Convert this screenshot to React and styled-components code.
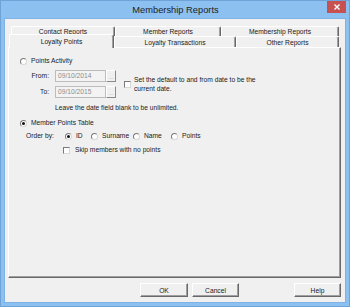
import React from 'react';
import styled, { createGlobalStyle } from 'styled-components';

const Global = createGlobalStyle`
  html, body { margin: 0; padding: 0; background: #8cc0f0; }
  body { font-family: "Liberation Sans", Arial, sans-serif; }
  * { box-sizing: border-box; }
`;

const Window = styled.div`
  width: 350px;
  height: 307px;
  border: 1px solid #6fa3d8;
  background: #8cc0f0;
  display: flex;
  flex-direction: column;
`;

const TitleBar = styled.div`
  height: 18px;
  flex: none;
  display: grid;
  grid-template-columns: 1fr auto 1fr;
  align-items: start;
  padding: 0 3px 0 4px;
`;

const Title = styled.div`
  grid-column: 2;
  font-size: 9.3px;
  line-height: 18px;
  color: #1e1e1e;
  white-space: nowrap;
`;

const Close = styled.div`
  grid-column: 3;
  justify-self: end;
  width: 19px;
  height: 12px;
  background: #c75050;
  display: flex;
  align-items: center;
  justify-content: center;
`;

const Client = styled.div`
  flex: 1;
  margin: 0 4px 4px;
  background: #f0f0f0;
  outline: 1px solid #7fb3e6;
  display: flex;
  flex-direction: column;
  padding: 7px 4px 5px 3px;
  font-size: 6.7px;
  color: #1a1a1a;
`;

const TabArea = styled.div`
  display: flex;
  flex-direction: column;
  padding-left: 3px;
  flex: none;
`;

const TabRow = styled.div`
  display: flex;
  height: ${p => p.$h}px;
`;

const Tab = styled.div`
  width: ${p => p.$w}px;
  height: 100%;
  display: flex;
  align-items: center;
  justify-content: center;
  white-space: nowrap;
  background: #f0f0f0;
  border-top: 1px solid #ffffff;
  border-left: 1px solid #ffffff;
  border-right: 1px solid #696969;
  box-shadow: inset -1px 0 0 #a0a0a0;
  border-radius: 2px 2px 0 0;
`;

const ActiveTab = styled(Tab)`
  width: ${p => p.$w + 2}px;
  height: calc(100% + 3px);
  margin: -2px 0 -1px -2px;
  position: relative;
  z-index: 1;
  padding-bottom: 1px;
`;

const Panel = styled.div`
  flex: 1;
  border-style: solid;
  border-width: 1px;
  border-color: #ffffff #696969 #696969 #ffffff;
  box-shadow: inset -1px -1px 0 #a0a0a0;
  padding: 9px 0 0 11px;
  display: flex;
  flex-direction: column;
  align-items: flex-start;
`;

const OptionRow = styled.div`
  display: flex;
  align-items: center;
  gap: ${p => p.$gap || 4}px;
  height: 8px;
  line-height: 8px;
  margin-top: ${p => p.$mt || 0}px;
  margin-left: ${p => p.$ml || 0}px;
`;

const Radio = styled.span`
  width: 7px;
  height: 7px;
  flex: none;
  border-radius: 50%;
  border: 1px solid;
  border-color: #7a7a7a #d8d8d8 #d8d8d8 #7a7a7a;
  background: #ffffff;
  display: flex;
  align-items: center;
  justify-content: center;
  &::after {
    content: '';
    width: 3px;
    height: 3px;
    border-radius: 50%;
    background: ${p => (p.$checked ? '#111' : 'transparent')};
  }
`;

const Check = styled.span`
  width: 7px;
  height: 7px;
  flex: none;
  border: 1px solid;
  border-color: #7a7a7a #d8d8d8 #d8d8d8 #7a7a7a;
  background: #ffffff;
`;

const DateBlock = styled.div`
  display: flex;
  align-items: center;
  margin-top: 5px;
`;

const DateGrid = styled.div`
  display: grid;
  grid-template-columns: 35px 51px 10px;
  grid-auto-rows: 12px;
  row-gap: 4px;
  align-items: stretch;
`;

const DateLabel = styled.div`
  text-align: right;
  padding-right: 6px;
  line-height: 12px;
`;

const DateInput = styled.div`
  border: 1px solid #bcbcbc;
  background: #f3f3f3;
  color: #8c8c8c;
  padding-left: 2px;
  line-height: 10px;
`;

const DotsButton = styled.div`
  border-style: solid;
  border-width: 1px;
  border-color: #ffffff #8a8a8a #8a8a8a #ffffff;
  background: #f0f0f0;
  color: #8c8c8c;
  text-align: center;
  line-height: 12px;
  font-size: 5px;
`;

const DefaultBox = styled.div`
  display: flex;
  align-items: center;
  gap: 3px;
  margin-left: 8px;
  line-height: 9px;
`;

const Hint = styled.div`
  margin: 6px 0 0 35px;
  line-height: 8px;
  white-space: nowrap;
`;

const OrderRow = styled.div`
  display: flex;
  align-items: center;
  height: 8px;
  line-height: 8px;
  margin: 5px 0 0 6px;
`;

const OrderLabel = styled.div`
  width: 39px;
`;

const OrderOption = styled.div`
  width: ${p => (p.$w ? `${p.$w}px` : 'auto')};
  display: flex;
  align-items: center;
  gap: 4px;
`;

const ButtonBar = styled.div`
  flex: none;
  display: flex;
  justify-content: flex-end;
  margin-top: 5px;
  height: 14px;
`;

const Button = styled.div`
  width: ${p => p.$w}px;
  margin-left: ${p => p.$ml || 0}px;
  border-style: solid;
  border-width: 1px;
  border-color: #ffffff #696969 #696969 #ffffff;
  box-shadow: inset -1px -1px 0 #a0a0a0;
  background: #f0f0f0;
  display: flex;
  align-items: center;
  justify-content: center;
`;

export default function App() {
  return (
    <>
      <Global />
      <Window>
        <TitleBar>
          <Title>Membership Reports</Title>
          <Close>
            <svg width="6" height="6" viewBox="0 0 6 6">
              <path d="M0.5 0.5 L5.5 5.5 M5.5 0.5 L0.5 5.5" stroke="#fff" strokeWidth="1.4" />
            </svg>
          </Close>
        </TitleBar>
        <Client>
          <TabArea>
            <TabRow $h={10}>
              <Tab $w={104}>Contact Reports</Tab>
              <Tab $w={106}>Member Reports</Tab>
              <Tab $w={118}>Membership Reports</Tab>
            </TabRow>
            <TabRow $h={11}>
              <ActiveTab $w={103}>Loyalty Points</ActiveTab>
              <Tab $w={122}>Loyalty Transactions</Tab>
              <Tab $w={103}>Other Reports</Tab>
            </TabRow>
          </TabArea>
          <Panel>
            <OptionRow>
              <Radio />
              <span>Points Activity</span>
            </OptionRow>
            <DateBlock>
              <DateGrid>
                <DateLabel>From:</DateLabel>
                <DateInput>09/10/2014</DateInput>
                <DotsButton>...</DotsButton>
                <DateLabel>To:</DateLabel>
                <DateInput>09/10/2015</DateInput>
                <DotsButton>...</DotsButton>
              </DateGrid>
              <DefaultBox>
                <Check />
                <span>
                  Set the default to and from date to be the
                  <br />
                  current date.
                </span>
              </DefaultBox>
            </DateBlock>
            <Hint>Leave the date field blank to be unlimited.</Hint>
            <OptionRow $mt={7}>
              <Radio $checked />
              <span>Member Points Table</span>
            </OptionRow>
            <OrderRow>
              <OrderLabel>Order by:</OrderLabel>
              <OrderOption $w={26}>
                <Radio $checked />
                <span>ID</span>
              </OrderOption>
              <OrderOption $w={42}>
                <Radio />
                <span>Surname</span>
              </OrderOption>
              <OrderOption $w={38}>
                <Radio />
                <span>Name</span>
              </OrderOption>
              <OrderOption>
                <Radio />
                <span>Points</span>
              </OrderOption>
            </OrderRow>
            <OptionRow $mt={6} $ml={43} $gap={5}>
              <Check />
              <span>Skip members with no points</span>
            </OptionRow>
          </Panel>
          <ButtonBar>
            <Button $w={48}>OK</Button>
            <Button $w={47} $ml={4}>Cancel</Button>
            <Button $w={47} $ml={55}>Help</Button>
          </ButtonBar>
        </Client>
      </Window>
    </>
  );
}
